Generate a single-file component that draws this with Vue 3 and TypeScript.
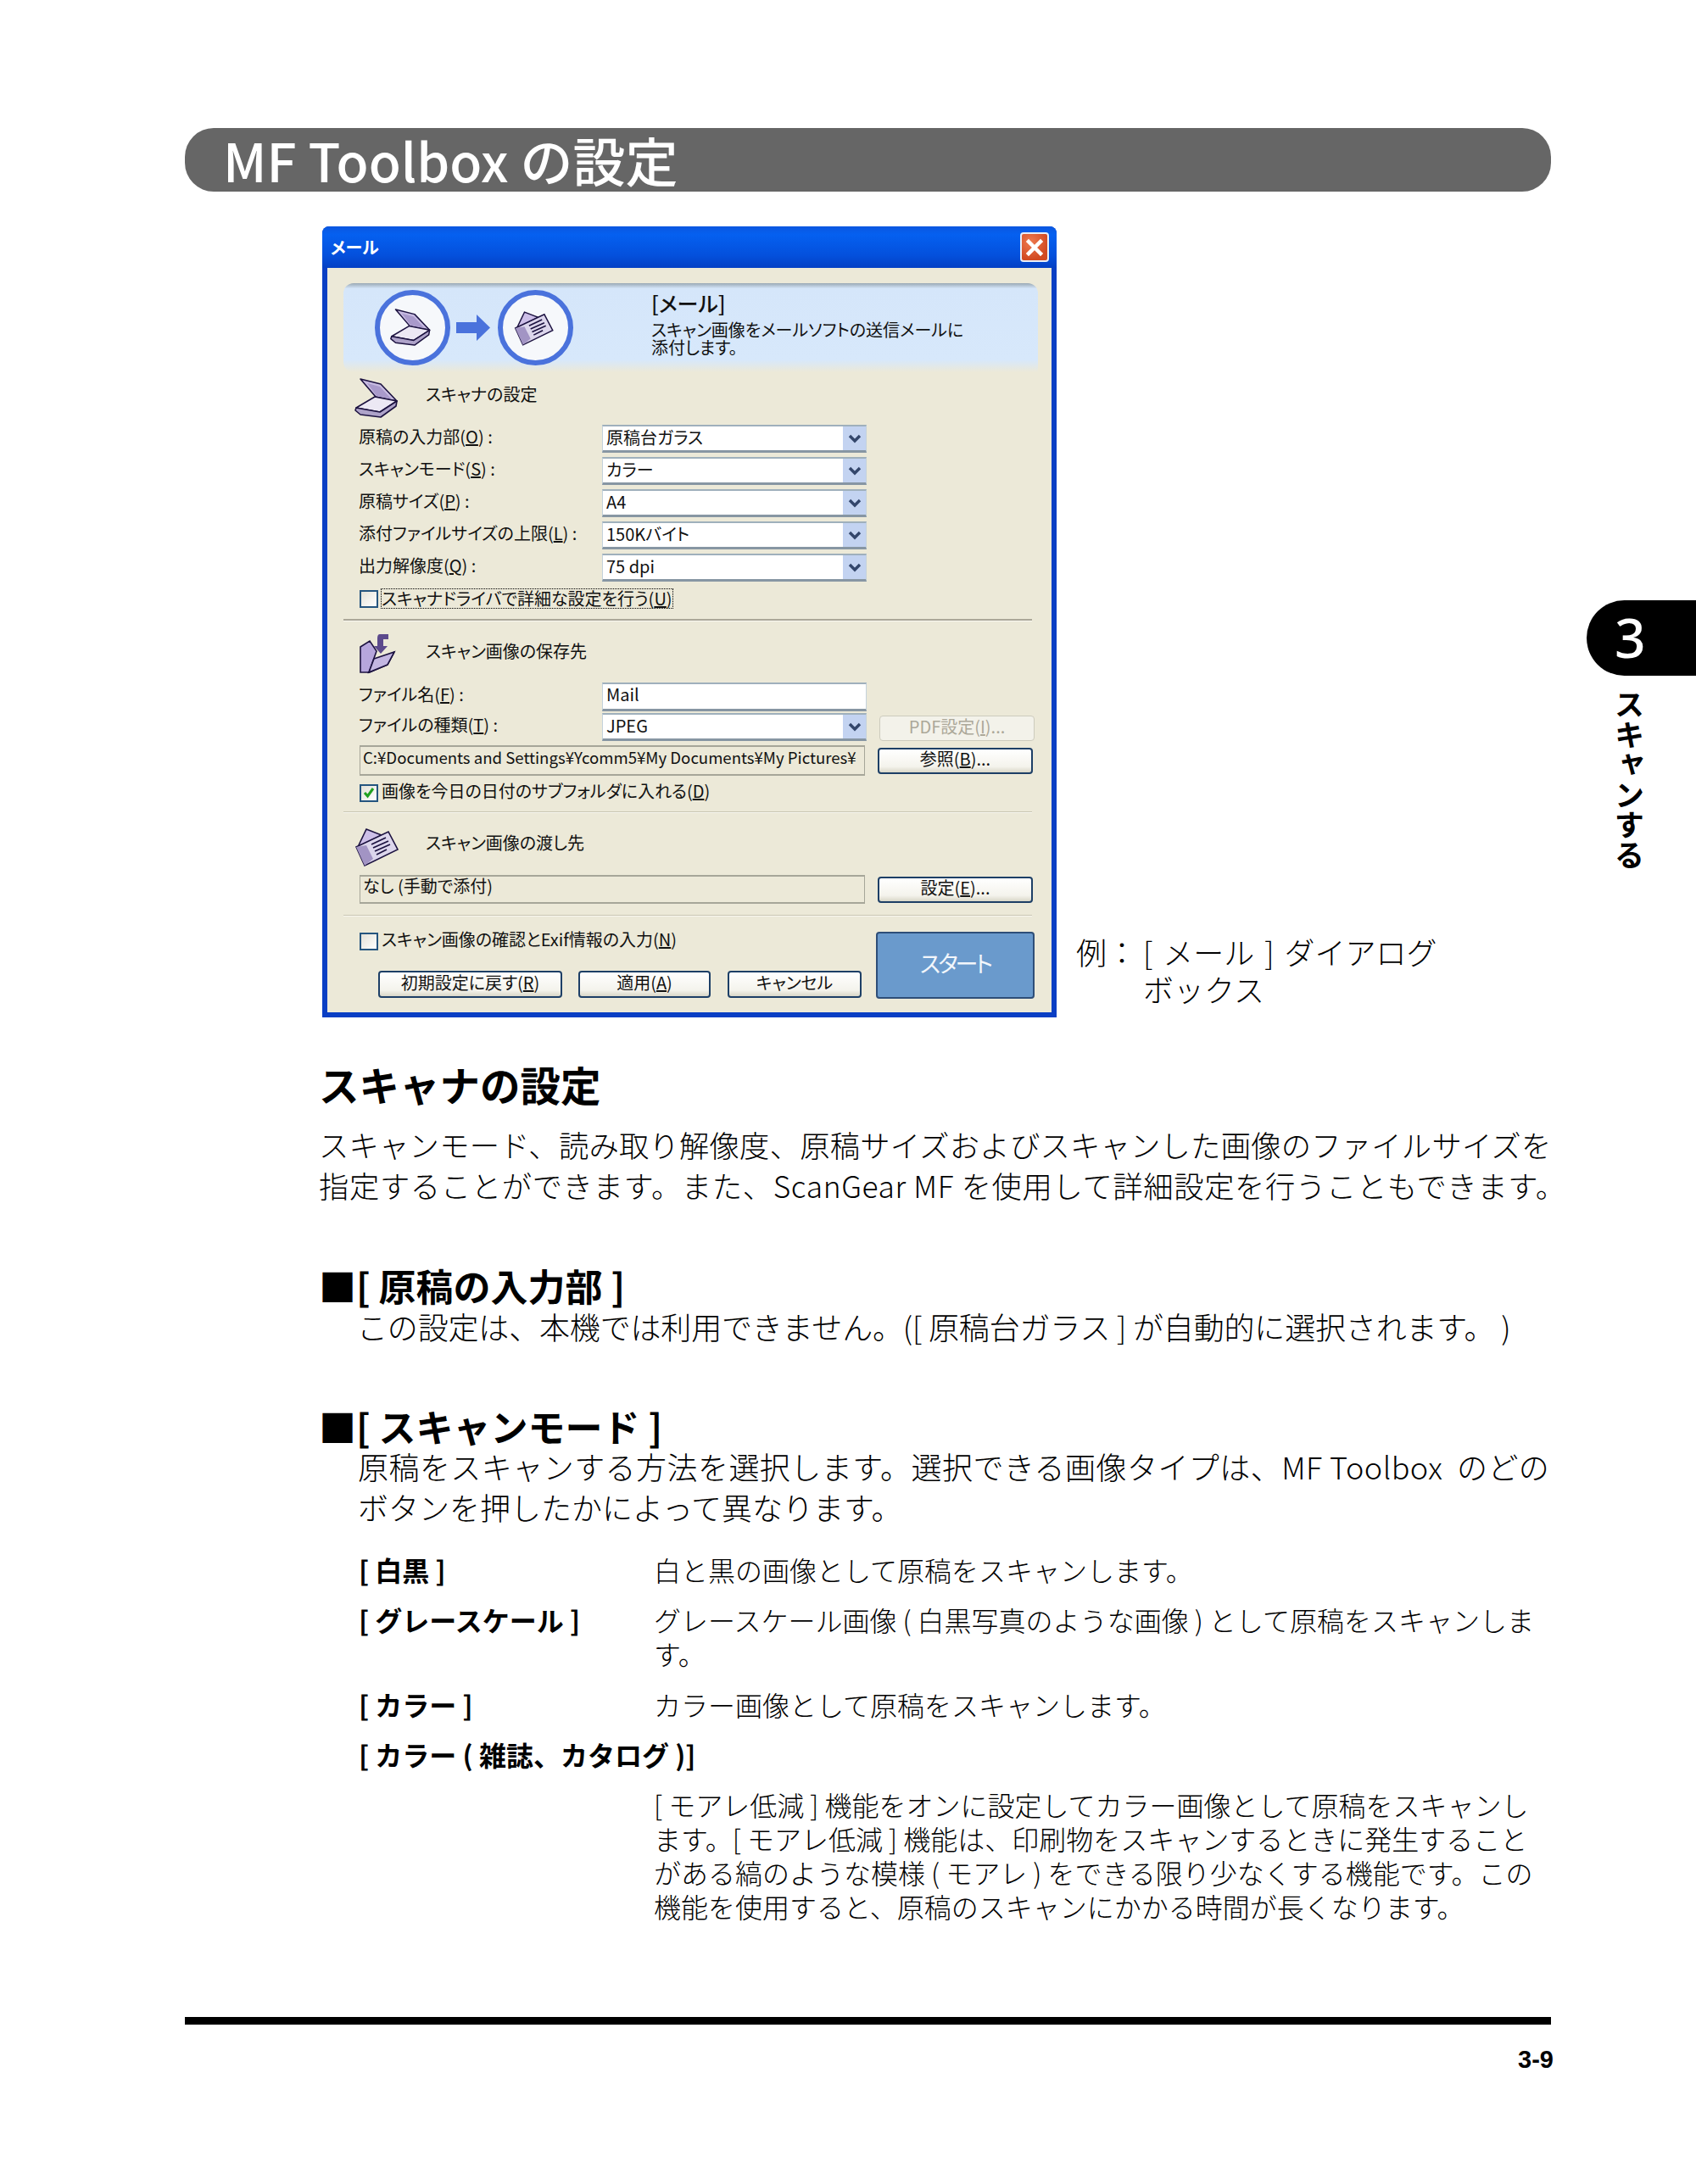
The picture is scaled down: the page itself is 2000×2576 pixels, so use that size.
<script setup lang="ts">
interface Field { label: string; key: string; rest: string; value: string }
const combos: Field[] = [
  { label: '原稿の入力部(', key: 'O', rest: ') :', value: '原稿台ガラス' },
  { label: 'スキャンモード(', key: 'S', rest: ') :', value: 'カラー' },
  { label: '原稿サイズ(', key: 'P', rest: ') :', value: 'A4' },
  { label: '添付ファイルサイズの上限(', key: 'L', rest: ') :', value: '150Kバイト' },
  { label: '出力解像度(', key: 'Q', rest: ') :', value: '75 dpi' },
]
const terms = [
  { term: '[ 白黒 ]', lines: ['白と黒の画像として原稿をスキャンします。'] },
  { term: '[ グレースケール ]', lines: ['グレースケール画像 ( 白黒写真のような画像 ) として原稿をスキャンしま', 'す。'] },
  { term: '[ カラー ]', lines: ['カラー画像として原稿をスキャンします。'] },
  { term: '[ カラー ( 雑誌、カタログ )]', lines: [] as string[] },
  {
    term: '',
    lines: [
      '[ モアレ低減 ] 機能をオンに設定してカラー画像として原稿をスキャンし',
      'ます。[ モアレ低減 ] 機能は、印刷物をスキャンするときに発生すること',
      'がある縞のような模様 ( モアレ ) をできる限り少なくする機能です。この',
      '機能を使用すると、原稿のスキャンにかかる時間が長くなります。',
    ],
  },
]
</script>

<template>
  <div class="page" lang="ja">
    <main class="main">
      <h1 class="banner-title">MF Toolbox の設定</h1>

      <div class="figure">
        <div class="dialog">
          <div class="titlebar">
            <span class="title">メール</span>
            <span class="close">
              <svg width="22" height="22" viewBox="0 0 22 22"><path d="M4 4 L18 18 M18 4 L4 18" stroke="#fff" stroke-width="4.5" stroke-linecap="square" /></svg>
            </span>
          </div>
          <div class="dlg-body">
            <div class="banner">
              <span class="circle">
                <svg width="56" height="47" viewBox="12 5 60 50">
                  <path d="M20 7 L44 13 L63 33 L38 28 Z" fill="#c8bce2" stroke="#1c1240" stroke-width="1.6" stroke-linejoin="round" />
                  <path d="M28 12 L43 16 L57 31 L39 27 Z" fill="#a99acb" />
                  <path d="M15 41 L37 28 L63 33 L43 46 Z" fill="#ece8f4" stroke="#1c1240" stroke-width="1.6" stroke-linejoin="round" />
                  <path d="M15 41 L43 46 L63 33 L62 39 L44 52 L20 49 L14 44 Z" fill="#aea3c9" stroke="#1c1240" stroke-width="1.6" stroke-linejoin="round" />
                </svg>
              </span>
              <svg class="arrow" width="40" height="31" viewBox="0 0 40 31"><path d="M0 9 H24 V0 L40 15.5 L24 31 V22 H0 Z" fill="#4a72dc" /></svg>
              <span class="circle">
                <svg width="54" height="46" viewBox="7 3 60 50">
                  <path d="M22 7 L40 14 L12 28 Z" fill="#cdbfe8" stroke="#1c1240" stroke-width="1.6" />
                  <path d="M10 28 L48 10 L59 31 L20 50 Z" fill="#dcd6ec" stroke="#1c1240" stroke-width="1.6" />
                  <path d="M10 28 L22 26 L30 42 L20 50 Z" fill="#a294c4" />
                  <path d="M28 25 L45 17 M30 29 L48 21 M32 33 L50 25 M34 37 L46 31" stroke="#1c1240" stroke-width="1.8" />
                </svg>
              </span>
              <div class="banner-text">
                <div class="banner-head">[メール]</div>
                <div>スキャン画像をメールソフトの送信メールに</div>
                <div>添付します。</div>
              </div>
            </div>

            <div class="sec sec-scan">
              <svg width="60" height="50" viewBox="12 5 60 50">
                <path d="M20 7 L44 13 L63 33 L38 28 Z" fill="#c8bce2" stroke="#1c1240" stroke-width="1.6" stroke-linejoin="round" />
                <path d="M28 12 L43 16 L57 31 L39 27 Z" fill="#a99acb" />
                <path d="M15 41 L37 28 L63 33 L43 46 Z" fill="#ece8f4" stroke="#1c1240" stroke-width="1.6" stroke-linejoin="round" />
                <path d="M15 41 L43 46 L63 33 L62 39 L44 52 L20 49 L14 44 Z" fill="#aea3c9" stroke="#1c1240" stroke-width="1.6" stroke-linejoin="round" />
              </svg>
              <span class="sec-title">スキャナの設定</span>
            </div>

            <div v-for="c in combos" :key="c.key" class="row">
              <span class="label">{{ c.label }}<u>{{ c.key }}</u>{{ c.rest }}</span>
              <span class="combo">
                <span class="val">{{ c.value }}</span>
                <span class="drop"><svg width="16" height="11" viewBox="0 0 16 11"><path d="M2 2 L8 8 L14 2" fill="none" stroke="#33466b" stroke-width="3.4" /></svg></span>
              </span>
            </div>

            <div class="check check-first">
              <span class="box"></span>
              <span class="focus">スキャナドライバで詳細な設定を行う(<u>U</u>)</span>
            </div>
            <div class="sep sep-strong"></div>

            <div class="sec sec-save">
              <svg width="60" height="55" viewBox="7 2 60 55">
                <path d="M15 22 L26 15 L34 27 L25 52 L15 52 Z" fill="#b6a6dc" stroke="#1c1240" stroke-width="1.6" />
                <path d="M25 52 L55 28 L47 43 L26 52 Z" fill="#8c7cb8" stroke="#1c1240" stroke-width="1.6" />
                <path d="M31 36 L55 28 L47 43 L25 52 Z" fill="#c3b6e2" stroke="#1c1240" stroke-width="1.6" />
                <path d="M48 7 H38 Q35 7 35 12 V21 H31 L39 30 L47 21 H42 V13 H48 Z" fill="#5c4a8c" />
              </svg>
              <span class="sec-title sec-title-save">スキャン画像の保存先</span>
            </div>

            <div class="row row-name">
              <span class="label">ファイル名(<u>F</u>) :</span>
              <span class="combo input"><span class="val val-up">Mail</span></span>
            </div>
            <div class="row row-type">
              <span class="label">ファイルの種類(<u>T</u>) :</span>
              <span class="combo">
                <span class="val">JPEG</span>
                <span class="drop"><svg width="16" height="11" viewBox="0 0 16 11"><path d="M2 2 L8 8 L14 2" fill="none" stroke="#33466b" stroke-width="3.4" /></svg></span>
              </span>
              <span class="btn btn-side disabled">PDF設定(<u>I</u>)...</span>
            </div>
            <div class="row row-path">
              <span class="readonly">C:¥Documents and Settings¥Ycomm5¥My Documents¥My Pictures¥</span>
              <span class="btn btn-side">参照(<u>B</u>)...</span>
            </div>
            <div class="check check-date">
              <span class="box checked">
                <svg width="16" height="16" viewBox="0 0 16 16"><path d="M3 8 L6.5 12 L13 3" fill="none" stroke="#21a121" stroke-width="3" /></svg>
              </span>
              <span class="check-text">画像を今日の日付のサブフォルダに入れる(<u>D</u>)</span>
            </div>
            <div class="sep"></div>

            <div class="sec sec-send">
              <svg width="60" height="50" viewBox="7 3 60 50">
                <path d="M22 7 L40 14 L12 28 Z" fill="#cdbfe8" stroke="#1c1240" stroke-width="1.6" />
                <path d="M10 28 L48 10 L59 31 L20 50 Z" fill="#dcd6ec" stroke="#1c1240" stroke-width="1.6" />
                <path d="M10 28 L22 26 L30 42 L20 50 Z" fill="#a294c4" />
                <path d="M28 25 L45 17 M30 29 L48 21 M32 33 L50 25 M34 37 L46 31" stroke="#1c1240" stroke-width="1.8" />
              </svg>
              <span class="sec-title">スキャン画像の渡し先</span>
            </div>

            <div class="row row-dest">
              <span class="readonly dest">なし (手動で添付)</span>
              <span class="btn btn-side">設定(<u>E</u>)...</span>
            </div>
            <div class="sep sep-last"></div>

            <div class="bottom">
              <div class="bottom-left">
                <div class="check check-exif">
                  <span class="box"></span>
                  <span class="check-text">スキャン画像の確認とExif情報の入力(<u>N</u>)</span>
                </div>
                <div class="btn-row">
                  <span class="btn b-reset">初期設定に戻す(<u>R</u>)</span>
                  <span class="btn b-apply">適用(<u>A</u>)</span>
                  <span class="btn b-cancel">キャンセル</span>
                </div>
              </div>
              <span class="start">スタート</span>
            </div>
          </div>
        </div>

        <div class="caption">
          <span class="cap-key">例：</span>
          <span class="cap-text">[ メール ] ダイアログ<br />ボックス</span>
        </div>
      </div>

      <section class="content">
        <h2>スキャナの設定</h2>
        <div class="para">
          <div class="l1">スキャンモード、読み取り解像度、原稿サイズおよびスキャンした画像のファイルサイズを</div>
          <div class="l2">指定することができます。また、ScanGear MF を使用して詳細設定を行うこともできます。</div>
        </div>

        <h3 class="h3a">■[ 原稿の入力部 ]</h3>
        <div class="sub">この設定は、本機では利用できません。([ 原稿台ガラス ] が自動的に選択されます。 )</div>

        <h3 class="h3b">■[ スキャンモード ]</h3>
        <div class="sub-2">
          <div class="l4">原稿をスキャンする方法を選択します。選択できる画像タイプは、MF Toolbox&nbsp; のどの</div>
          <div>ボタンを押したかによって異なります。</div>
        </div>

        <dl class="terms">
          <template v-for="(t, i) in terms" :key="i">
            <dt>{{ t.term }}</dt>
            <dd>
              <div v-for="line in t.lines" :key="line">{{ line }}</div>
            </dd>
          </template>
        </dl>
      </section>

      <div class="rule"></div>
      <div class="folio">3-9</div>
    </main>

    <aside class="side">
      <div class="tab">3</div>
      <div class="tab-label">スキャンする</div>
    </aside>
  </div>
</template>

<style>
html, body { margin: 0; background: #fff; }
</style>

<style scoped>
.page {
  display: flex;
  width: 2000px;
  height: 2576px;
  overflow: hidden;
  background: #fff;
  color: #000;
  font-family: "Noto Sans CJK JP", "Noto Sans", sans-serif;
}
.main {
  box-sizing: border-box;
  width: 1829px;
  padding: 151px 0 0 218px;
  flex: none;
}
.banner-title {
  box-sizing: border-box;
  height: 75px;
  margin: 0;
  padding-left: 45px;
  border-radius: 34px;
  background: #666;
  color: #fff;
  font-size: 62px;
  font-weight: 500;
  line-height: 75px;
  white-space: nowrap;
}
.figure {
  display: flex;
  align-items: flex-end;
  margin: 41px 0 0 162px;
}
.dialog {
  box-sizing: border-box;
  width: 866px;
  height: 933px;
  flex: none;
  border-radius: 8px 8px 0 0;
  background: #0a3fc4;
  padding: 0 6px 6px;
  font-size: 20px;
  line-height: 24px;
  font-feature-settings: "palt";
  color: #111;
}
.titlebar {
  display: flex;
  align-items: center;
  justify-content: space-between;
  height: 49px;
  margin: 0 -6px;
  padding: 0 9px 0 10px;
  border-radius: 8px 8px 0 0;
  background: linear-gradient(#0a57e0, #0560f0 20%, #0450dc 70%, #0440c4);
}
.title { color: #fff; font-size: 20px; font-weight: 700; }
.close {
  display: flex;
  align-items: center;
  justify-content: center;
  box-sizing: border-box;
  width: 34px;
  height: 35px;
  border: 2px solid #e8eef8;
  border-radius: 4px;
  background: radial-gradient(circle at 35% 30%, #ee7a50, #d24a22 70%);
}
.dlg-body {
  box-sizing: border-box;
  height: 878px;
  padding-top: 18px;
  background: #ece9d8;
}
.banner {
  display: flex;
  align-items: center;
  box-sizing: border-box;
  width: 819px;
  height: 105px;
  margin-left: 19px;
  padding-left: 37px;
  border-radius: 12px 12px 0 12px;
  background: linear-gradient(#9aa9b4, #d5e6fa 6%, #d7e8fb 86%, #ece9d8);
}
.circle {
  display: flex;
  align-items: center;
  justify-content: center;
  box-sizing: border-box;
  width: 89px;
  height: 89px;
  flex: none;
  border: 6px solid #4a72dc;
  border-radius: 50%;
  background: #f6f8fb;
}
.arrow { margin: 0 9px 0 7px; flex: none; }
.banner-text {
  align-self: flex-start;
  margin: 9px 0 0 92px;
  font-size: 20px;
  line-height: 21px;
}
.banner-head { font-size: 25px; line-height: 28px; margin-bottom: 7px; font-weight: 500; }
.sec {
  display: flex;
  align-items: center;
  gap: 25px;
  padding-left: 31px;
}
.sec svg { flex: none; }
.sec-title { padding-bottom: 10px; }
.sec-title-save { padding-bottom: 6px; }
.sec-scan { margin-top: 6px; height: 50px; }
.sec-save { margin-top: 10px; height: 55px; }
.sec-send { height: 50px; }
.row {
  display: flex;
  align-items: center;
  height: 33px;
  margin-top: 5px;
  padding-left: 37px;
}
.sec-scan + .row { margin-top: 6px; }
.label { width: 287px; flex: none; white-space: nowrap; padding-bottom: 6px; }
.combo {
  display: flex;
  align-items: center;
  justify-content: space-between;
  box-sizing: border-box;
  width: 312px;
  height: 33px;
  flex: none;
  border-top: 2px solid #9fb0bc;
  border-bottom: 3px solid #8796a3;
  border-left: 1px solid #c4d2dc;
  border-right: 1px solid #c4d2dc;
  background: #fff;
}
.val { padding: 0 0 3px 4px; white-space: nowrap; }
.val-up { padding-bottom: 6px; }
.drop {
  display: flex;
  align-items: center;
  justify-content: center;
  width: 27px;
  height: 100%;
  background: #c3d3f1;
}
.input { height: 34px; }
.row-name { height: 34px; margin-top: 7px; }
.row-type { margin-top: 2px; }
.row-path { height: 36px; margin-top: 5px; padding-left: 38px; }
.row-dest { height: 34px; margin-top: 8px; padding-left: 38px; }
.btn {
  display: flex;
  align-items: center;
  justify-content: center;
  box-sizing: border-box;
  height: 31px;
  flex: none;
  padding-bottom: 4px;
  border: 2px solid #1d3f66;
  border-radius: 4px;
  background: linear-gradient(#fff, #f4f3ec 75%, #d9d7c8);
  white-space: nowrap;
}
.btn-side { width: 183px; margin-left: 15px; }
.disabled {
  height: 30px;
  margin-top: 3px;
  border: 1px solid #cdcbbd;
  background: #f3f2ea;
  color: #aca899;
}
.readonly {
  box-sizing: border-box;
  width: 596px;
  height: 100%;
  flex: none;
  padding-left: 3px;
  border: 1px solid #a6a699;
  border-top-width: 2px;
  border-bottom-width: 2px;
  white-space: nowrap;
  line-height: 24px;
  font-feature-settings: normal;
  font-size: 18.6px;
}
.dest { line-height: 22px; font-size: 20px; font-feature-settings: "palt"; }
.check {
  display: flex;
  align-items: center;
  gap: 4px;
  height: 22px;
  padding-left: 38px;
  white-space: nowrap;
}
.check-text { padding-bottom: 5px; }
.box {
  display: flex;
  align-items: center;
  justify-content: center;
  box-sizing: border-box;
  width: 22px;
  height: 21px;
  flex: none;
  border: 2px solid #25557f;
  background: linear-gradient(135deg, #e4e2d8, #fff);
}
.check-first { margin-top: 9px; }
.check-date { margin-top: 9px; }
.focus { outline: 1px dotted #000; line-height: 22px; }
.sep {
  width: 812px;
  height: 1px;
  margin: 11px 0 15px 19px;
  background: #c9c6b2;
  border-bottom: 1px solid #f8f7f0;
}
.sep-strong { margin: 13px 0 0 19px; background: #aca899; height: 2px; }
.sep-last { margin: 13px 0 0 19px; }
.bottom {
  display: flex;
  margin-top: 18px;
  padding-left: 38px;
}
.bottom-left { width: 609px; flex: none; }
.check-exif { padding-left: 0; }
.btn-row {
  display: flex;
  margin-top: 24px;
  padding-left: 22px;
}
.btn-row .btn { height: 32px; }
.b-reset { width: 217px; }
.b-apply { width: 156px; margin-left: 19px; }
.b-cancel { width: 158px; margin-left: 20px; }
.start {
  display: flex;
  align-items: center;
  justify-content: center;
  box-sizing: border-box;
  width: 187px;
  height: 79px;
  border: 2px solid #2e4e78;
  border-radius: 4px;
  background: #6a9acc;
  color: #f2f6fb;
  font-size: 27px;
  letter-spacing: -3px;
  padding-bottom: 6px;
}
.caption {
  display: flex;
  margin: 0 0 12px 23px;
  font-size: 36px;
  font-weight: 300;
  line-height: 44px;
  white-space: nowrap;
}
.cap-key { width: 79px; flex: none; }
.cap-text { word-spacing: 4px; }
.content { padding-left: 158px; white-space: nowrap; }
h2 {
  margin: 55px 0 0;
  font-size: 47.5px;
  font-weight: 700;
  line-height: 48px;
}
.para {
  margin-top: 23px;
  font-size: 35.3px;
  font-weight: 300;
  line-height: 48px;
}
.l1 { letter-spacing: 0.24px; }
.l2 { letter-spacing: 0.65px; }
h3 {
  margin: 70px 0 0;
  font-size: 44px;
  font-weight: 700;
  line-height: 48px;
}
.sub, .sub-2 {
  padding-left: 46px;
  font-size: 36px;
  font-weight: 300;
  line-height: 48px;
}
.sub { margin-top: 0; padding-left: 45px; letter-spacing: -0.17px; }
.l4 { letter-spacing: 0.45px; }
.sub-2 { margin-top: -1px; }
.terms {
  display: grid;
  grid-template-columns: 348px 1fr;
  row-gap: 19.3px;
  margin: 30px 0 0;
  padding-left: 47px;
  font-size: 32px;
  line-height: 40px;
}
dt { font-weight: 700; }
dd { margin: 0; font-weight: 300; }
dt:empty { height: 0; }
.rule {
  height: 9px;
  margin-top: 111px;
  background: #000;
}
.folio {
  margin: 26px -3px 0 0;
  font-family: "Liberation Sans", sans-serif;
  font-size: 29px;
  font-weight: 700;
  line-height: 30px;
  text-align: right;
}
.side {
  flex: 1;
  padding-top: 708px;
}
.tab {
  box-sizing: border-box;
  width: 129px;
  height: 89px;
  margin-left: 42px;
  padding-left: 33px;
  border-radius: 45px 0 0 45px;
  background: #000;
  color: #fff;
  font-family: "Noto Sans", sans-serif;
  font-size: 64px;
  font-weight: 500;
  line-height: 88px;
}
.tab-label {
  margin: 16px 0 0 74px;
  writing-mode: vertical-rl;
  font-size: 35.5px;
  font-weight: 600;
  line-height: 36px;
}
</style>
